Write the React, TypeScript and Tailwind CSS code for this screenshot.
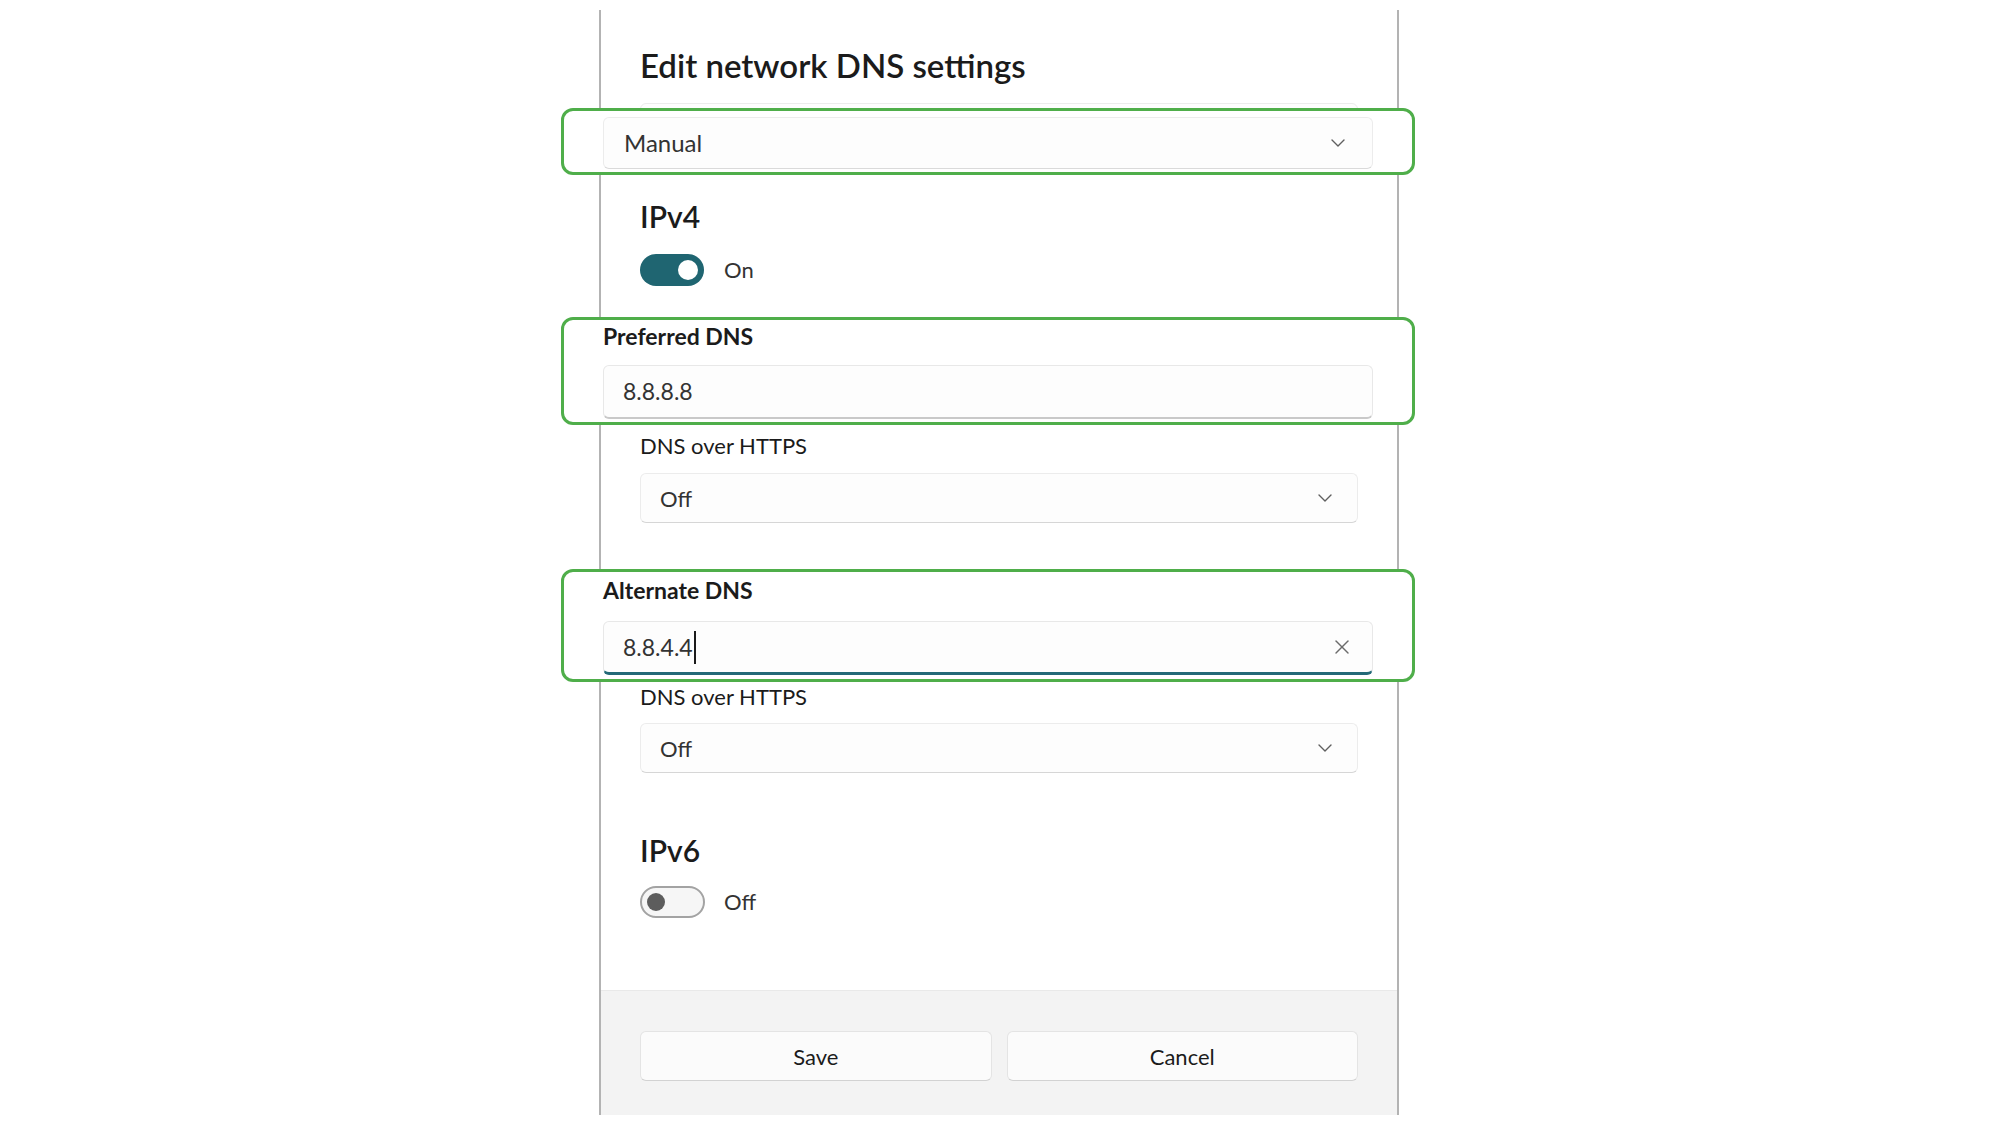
import React from 'react';

const font = { fontFamily: 'Lato, "Noto Sans", sans-serif' };

const Chevron: React.FC = () => (
  <svg width="14" height="8" viewBox="0 0 14 8" fill="none" className="shrink-0">
    <polyline points="1,1 7,7 13,1" stroke="#5f5f5f" strokeWidth="1.4" strokeLinecap="round" strokeLinejoin="round" />
  </svg>
);

const ClearIcon: React.FC = () => (
  <svg width="14" height="14" viewBox="0 0 14 14" fill="none" className="shrink-0">
    <line x1="1" y1="1" x2="13" y2="13" stroke="#6b6b6b" strokeWidth="1.4" strokeLinecap="round" />
    <line x1="13" y1="1" x2="1" y2="13" stroke="#6b6b6b" strokeWidth="1.4" strokeLinecap="round" />
  </svg>
);

const Toggle: React.FC<{ on: boolean }> = ({ on }) =>
  on ? (
    <div className="w-[64px] h-[32px] rounded-full bg-[#1f6571] flex items-center justify-end pr-[6px]">
      <div className="w-[20px] h-[20px] rounded-full bg-white" />
    </div>
  ) : (
    <div className="w-[65px] h-[32px] rounded-full bg-[#f6f6f6] border-2 border-[#a3a3a3] flex items-center pl-[5px]">
      <div className="w-[18px] h-[18px] rounded-full bg-[#5d5d5d]" />
    </div>
  );

const Highlight: React.FC<{ className: string; children: React.ReactNode }> = ({ className, children }) => (
  <div className={`relative z-10 -ml-[79px] w-[854px] bg-white border-[3px] border-[#4fae4a] rounded-[12px] px-[39px] ${className}`}>
    {children}
  </div>
);

const OffSelect: React.FC = () => (
  <div className="h-[50px] rounded-[6px] bg-[#fdfdfd] border border-[#ececec] border-b-[#d6d6d6] flex items-center justify-between pl-[19px] pr-[25px]">
    <span className="text-[22px] text-[#333333]">Off</span>
    <Chevron />
  </div>
);

export default function App() {
  return (
    <div className="min-h-screen bg-white pt-[10px]" style={font}>
      <div className="ml-[599px] w-[800px] h-[1105px] border-x-2 border-[#b3b3b3] bg-white flex flex-col">
        <div className="px-[39px] flex flex-col">
          <h1 className="mt-[35px] h-[40px] leading-[40px] text-[33px] font-semibold text-[#1b1b1b] whitespace-nowrap">
            Edit network DNS settings
          </h1>

          <div className="mt-[18px] h-[50px] rounded-[6px] bg-[#fdfdfd] border border-[#ececec]" />

          <Highlight className="-mt-[45px] h-[67px] pt-[6px]">
            <div className="h-[52px] rounded-[6px] bg-[#fdfdfd] border border-[#ececec] border-b-[#dadada] flex items-center justify-between pl-[20px] pr-[27px]">
              <span className="text-[24px] text-[#333333]">Manual</span>
              <Chevron />
            </div>
          </Highlight>

          <h2 className="mt-[23px] h-[36px] leading-[36px] text-[30px] font-semibold text-[#1b1b1b]">IPv4</h2>
          <div className="mt-[20px] flex items-center gap-[20px]">
            <Toggle on />
            <span className="text-[22px] leading-[28px] text-[#333333]">On</span>
          </div>

          <Highlight className="mt-[31px] h-[108px] pt-[1px]">
            <div className="h-[30px] leading-[30px] text-[23px] font-bold text-[#1b1b1b]">Preferred DNS</div>
            <div className="mt-[14px] h-[54px] rounded-[6px] bg-[#fdfdfd] border border-[#e8e8e8] border-b-2 border-b-[#c9c9c9] flex items-center pl-[19px]">
              <span className="text-[23px] text-[#333333]">8.8.8.8</span>
            </div>
          </Highlight>

          <div className="mt-[7px] h-[28px] leading-[28px] text-[22px] text-[#1b1b1b]">DNS over HTTPS</div>
          <div className="mt-[13px]">
            <OffSelect />
          </div>

          <Highlight className="mt-[46px] h-[113px] pt-[3px]">
            <div className="h-[30px] leading-[30px] text-[23px] font-bold text-[#1b1b1b]">Alternate DNS</div>
            <div className="mt-[16px] h-[54px] rounded-[6px] bg-[#fdfdfd] border border-[#e8e8e8] border-b-[3px] border-b-[#236977] flex items-center justify-between pl-[19px] pr-[23px]">
              <span className="flex items-center text-[23px] text-[#333333]">
                8.8.4.4
                <span className="ml-[1px] w-[2px] h-[33px] bg-[#1b1b1b]" />
              </span>
              <ClearIcon />
            </div>
          </Highlight>

          <div className="mt-[1px] h-[28px] leading-[28px] text-[22px] text-[#1b1b1b]">DNS over HTTPS</div>
          <div className="mt-[12px]">
            <OffSelect />
          </div>

          <h2 className="mt-[59px] h-[36px] leading-[36px] text-[30px] font-semibold text-[#1b1b1b]">IPv6</h2>
          <div className="mt-[18px] flex items-center gap-[19px]">
            <Toggle on={false} />
            <span className="text-[22px] leading-[28px] text-[#333333]">Off</span>
          </div>
        </div>

        <div className="mt-auto h-[125px] bg-[#f3f3f3] border-t border-[#e9e9e9] px-[39px] pt-[40px]">
          <div className="grid grid-cols-2 gap-[15px]">
            <button className="h-[50px] rounded-[6px] bg-[#fbfbfb] border border-[#e4e4e4] border-b-[#d2d2d2] text-[22px] text-[#1b1b1b]">
              Save
            </button>
            <button className="h-[50px] rounded-[6px] bg-[#fbfbfb] border border-[#e4e4e4] border-b-[#d2d2d2] text-[22px] text-[#1b1b1b]">
              Cancel
            </button>
          </div>
        </div>
      </div>
    </div>
  );
}
